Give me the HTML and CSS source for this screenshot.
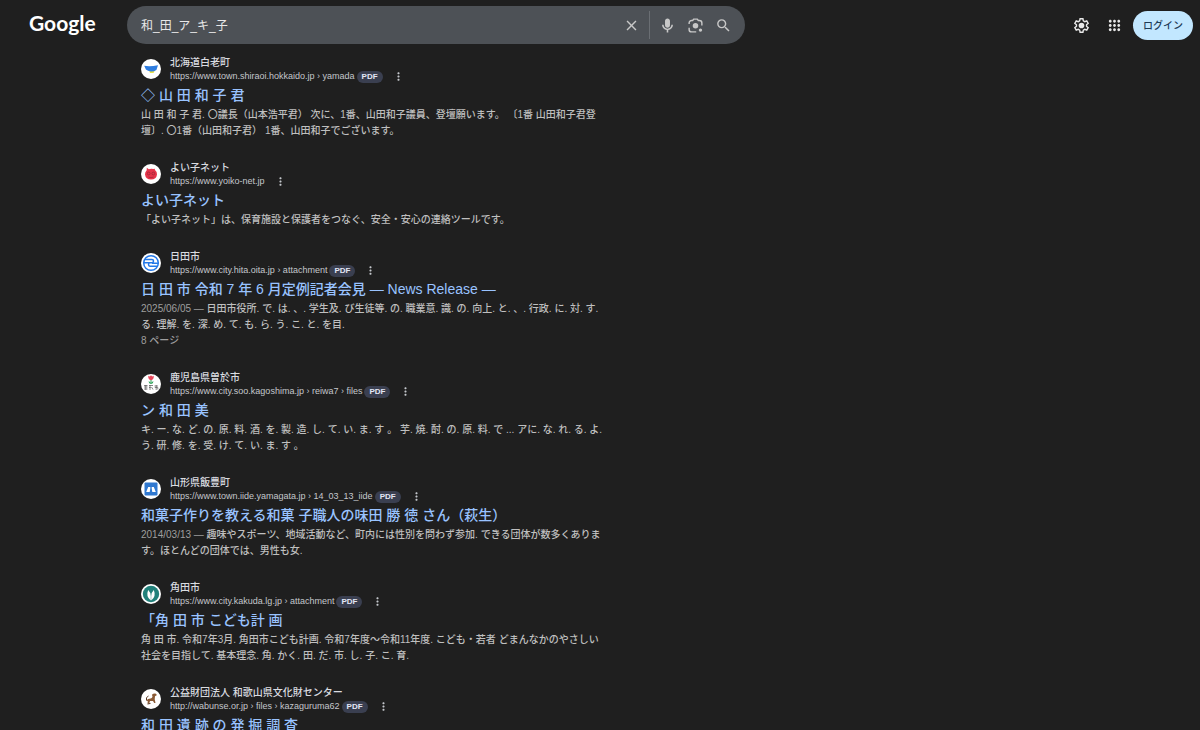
FILE: index.html
```html
<!DOCTYPE html>
<html lang="ja">

<head>
    <meta charset="utf-8">
    <meta name="viewport" content="width=device-width, initial-scale=1">
    <link rel="stylesheet" href="styles.css">

    <title>和_田_ア_キ_子 - Google 検索</title>
</head>

<body>

    <!-- shared icons -->
    <svg class="sprite" aria-hidden="true">
        <symbol id="dots" viewBox="0 0 24 24">
            <path d="M12 8c1.100 0 2-.9 2-2s-.9-2-2-2-2 .9-2 2 .9 2 2 2zm0 2c-1.100 0-2 .9-2 2s.9 2 2 2 2-.9 2-2-.9-2-2-2zm0 6c-1.100 0-2 .9-2 2s.9 2 2 2 2-.9 2-2-.9-2-2-2z" />
        </symbol>
    </svg>

    <div class="page">
        <header class="topbar">
            <a class="logo" href="#">Google</a>

            <form class="search" role="search">
                <input class="search-input" type="text" aria-label="検索" value="和_田_ア_キ_子">
                <button class="icon-button clear-button" type="button" aria-label="クリア">
                    <svg class="icon" viewBox="0 0 24 24"><path d="M19 6.410L17.590 5 12 10.590 6.410 5 5 6.410 10.590 12 5 17.590 6.410 19 12 13.410 17.590 19 19 17.590 13.410 12z" /></svg>
                </button>
                <button class="icon-button" type="button" aria-label="音声で検索">
                    <svg class="icon" viewBox="0 0 24 24"><path d="M12 15c1.900 0 3.500-1.500 3.500-3.500V5.500C15.500 3.500 13.900 2 12 2S8.500 3.500 8.500 5.500v6C8.500 13.500 10.100 15 12 15zm5.500-4c0 3.200-2.500 5.500-5.500 5.500S6.500 14.200 6.500 11h-2.200c0 3.800 2.900 6.900 6.600 7.400V22h2.200v-3.600c3.700-.5 6.600-3.600 6.600-7.400z" /></svg>
                </button>
                <button class="icon-button" type="button" aria-label="画像で検索">
                    <svg class="icon" viewBox="0 0 24 24">
                        <path class="line" d="M3 10V8.500A3.500 3.500 0 0 1 6.500 5H8l1.500-2h5L16 5h1.500A3.500 3.500 0 0 1 21 8.500V12M3 15v2.500A3.500 3.500 0 0 0 6.500 21H13" />
                        <circle cx="12" cy="12.500" r="3.900" />
                        <circle cx="19" cy="18.500" r="2.400" />
                    </svg>
                </button>
                <button class="icon-button" type="submit" aria-label="検索">
                    <svg class="icon" viewBox="0 0 24 24"><path d="M15.500 14h-.79l-.28-.27A6.471 6.471 0 0 0 16 9.500 6.500 6.500 0 1 0 9.500 16c1.610 0 3.090-.59 4.230-1.570l.27.28v.79l5 4.990L20.490 19l-4.990-5zm-6 0C7.010 14 5 11.990 5 9.500S7.010 5 9.500 5 14 7.010 14 9.500 11.990 14 9.500 14z" /></svg>
                </button>
            </form>

            <div class="account">
                <button class="icon-button" type="button" aria-label="設定">
                    <svg class="icon icon-light" viewBox="0 0 24 24">
                        <path class="line" d="M10 2.500h4l.6 3 1.900 1.100 2.900-1 2 3.400-2.300 2v2l2.300 2-2 3.400-2.900-1-1.900 1.100-.6 3h-4l-.6-3-1.900-1.100-2.900 1-2-3.400 2.300-2v-2l-2.300-2 2-3.400 2.900 1 1.900-1.100z" />
                        <circle cx="12" cy="12" r="4" />
                    </svg>
                </button>
                <button class="icon-button" type="button" aria-label="Google アプリ">
                    <svg class="icon icon-light" viewBox="0 0 24 24"><path d="M6 8c1.100 0 2-.9 2-2s-.9-2-2-2-2 .9-2 2 .9 2 2 2zm6 12c1.100 0 2-.9 2-2s-.9-2-2-2-2 .9-2 2 .9 2 2 2zm-6 0c1.100 0 2-.9 2-2s-.9-2-2-2-2 .9-2 2 .9 2 2 2zm0-6c1.100 0 2-.9 2-2s-.9-2-2-2-2 .9-2 2 .9 2 2 2zm6 0c1.100 0 2-.9 2-2s-.9-2-2-2-2 .9-2 2 .9 2 2 2zm4-8c0 1.100.9 2 2 2s2-.9 2-2-.9-2-2-2-2 .9-2 2zm-4 2c1.100 0 2-.9 2-2s-.9-2-2-2-2 .9-2 2 .9 2 2 2zm6 6c1.100 0 2-.9 2-2s-.9-2-2-2-2 .9-2 2 .9 2 2 2zm0 6c1.100 0 2-.9 2-2s-.9-2-2-2-2 .9-2 2 .9 2 2 2z" /></svg>
                </button>
                <button class="login-button" type="button">ログイン</button>
            </div>
        </header>

        <main class="results">
            <article class="result">
                <div class="source">
                    <svg class="favicon" viewBox="0 0 20 20">
                        <circle cx="10" cy="10" r="10" fill="#fff" />
                        <path d="M8 11h6l-1.500 3H9z" fill="#e6e04a" />
                        <path d="M3.200 6.800Q9 8 17 6.200l-1.600 4.700q-2.500 1.600-5.500 1.500-3.200-.1-5-1.800z" fill="#2f7de0" />
                    </svg>
                    <div>
                        <div class="site">北海道白老町</div>
                        <div class="address">
                            <cite>https://www.town.shiraoi.hokkaido.jp › yamada</cite>
                            <span class="badge">PDF</span>
                            <button class="more" type="button" aria-label="この検索結果について"><svg class="more-icon"><use href="#dots" /></svg></button>
                        </div>
                    </div>
                </div>
                <h3 class="title"><a href="#">◇ 山 田 和 子 君</a></h3>
                <p class="snippet">山 田 和 子 君. 〇議長（山本浩平君） 次に、1番、山田和子議員、登壇願います。 〔1番 山田和子君登<br>壇〕. 〇1番（山田和子君） 1番、山田和子でございます。</p>
            </article>

            <article class="result">
                <div class="source">
                    <svg class="favicon" viewBox="0 0 20 20">
                        <circle cx="10" cy="10" r="10" fill="#fff" />
                        <path d="M5.800 3.800l2 1.400Q10 4.300 12.300 5l1.400-.3.300 1.400q2.200 1.800 2 4.400-.6 5-6 5t-6-5q-.1-2.400 1.700-4.200z" fill="#e5344a" />
                        <g fill="none" stroke="#8c2434" stroke-width=".6"><circle cx="7.700" cy="9.500" r="1.400" /><circle cx="12.300" cy="9.500" r="1.400" /><path d="M7.500 13q2.500 1.500 5 0" /></g>
                    </svg>
                    <div>
                        <div class="site">よい子ネット</div>
                        <div class="address">
                            <cite>https://www.yoiko-net.jp</cite>
                            <button class="more" type="button" aria-label="この検索結果について"><svg class="more-icon"><use href="#dots" /></svg></button>
                        </div>
                    </div>
                </div>
                <h3 class="title"><a href="#">よい子ネット</a></h3>
                <p class="snippet">「よい子ネット」は、保育施設と保護者をつなぐ、安全・安心の連絡ツールです。</p>
            </article>

            <article class="result">
                <div class="source">
                    <svg class="favicon" viewBox="0 0 20 20">
                        <circle cx="10" cy="10" r="10" fill="#fff" />
                        <g fill="none" stroke="#2378e8" stroke-width="1.500">
                            <circle cx="10" cy="10" r="7.300" />
                            <path d="M4 6.500h7q1.500 0 1.500 1.500t-1.500 1.700H9q-1.500 0-1.500 1.700T9 13.300h7M3 9.800h6M11 10.200h6" />
                        </g>
                    </svg>
                    <div>
                        <div class="site">日田市</div>
                        <div class="address">
                            <cite>https://www.city.hita.oita.jp › attachment</cite>
                            <span class="badge">PDF</span>
                            <button class="more" type="button" aria-label="この検索結果について"><svg class="more-icon"><use href="#dots" /></svg></button>
                        </div>
                    </div>
                </div>
                <h3 class="title"><a href="#">日 田 市 令和 7 年 6 月定例記者会見 — News Release —</a></h3>
                <p class="snippet"><span class="meta">2025/06/05 —</span> 日田市役所. で. は. 、. 学生及. び生徒等. の. 職業意. 識. の. 向上. と. 、. 行政. に. 対. す.<br>る. 理解. を. 深. め. て. も. ら. う. こ. と. を目.</p>
                <div class="snippet meta">8 ページ</div>
            </article>

            <article class="result">
                <div class="source">
                    <svg class="favicon" viewBox="0 0 20 20">
                        <circle cx="10" cy="10" r="10" fill="#fff" />
                        <path d="M10 5v5" stroke="#2fa35a" stroke-width="1" />
                        <path d="M10 10q-.2-2.500-2.500-2.800.2 2.500 2.500 2.800zm0 0q.2-2.500 2.500-2.800-.2 2.500-2.500 2.800z" fill="#2fa35a" />
                        <path d="M7.300 1.800l1.500.7L10 1.200l1.200 1.300 1.500-.7q.5 4-2.700 4.400Q6.800 5.800 7.300 1.800z" fill="#e8485c" />
                        <path d="M3 11.500h3.500M3 13h3.500M3 15h3.500M4.800 11v5M8 11.500h4M8 13.500h1.800M10.500 13l1.500 2.500M9 11v5M13.500 12h3.500M15.200 11v5M13.800 13.500h3v2" fill="none" stroke="#555" stroke-width=".7" />
                    </svg>
                    <div>
                        <div class="site">鹿児島県曽於市</div>
                        <div class="address">
                            <cite>https://www.city.soo.kagoshima.jp › reiwa7 › files</cite>
                            <span class="badge">PDF</span>
                            <button class="more" type="button" aria-label="この検索結果について"><svg class="more-icon"><use href="#dots" /></svg></button>
                        </div>
                    </div>
                </div>
                <h3 class="title"><a href="#">ン 和 田 美</a></h3>
                <p class="snippet">キ. ー. な. ど. の. 原. 料. 酒. を. 製. 造. し. て. い. ま. す 。 芋. 焼. 酎. の. 原. 料. で ... アに. な. れ. る. よ.<br>う. 研. 修. を. 受. け. て. い. ま. す 。</p>
            </article>

            <article class="result">
                <div class="source">
                    <svg class="favicon" viewBox="0 0 20 20">
                        <circle cx="10" cy="10" r="10" fill="#fff" />
                        <rect x="3.500" y="3.500" width="13" height="13" rx="1" fill="#2f78d0" />
                        <path d="M5.200 13l2-5h2.100v1.500l-.6 3.500zM14.800 13l-2-5h-2.100v1.500l.6 3.500z" fill="#fff" />
                    </svg>
                    <div>
                        <div class="site">山形県飯豊町</div>
                        <div class="address">
                            <cite>https://www.town.iide.yamagata.jp › 14_03_13_iide</cite>
                            <span class="badge">PDF</span>
                            <button class="more" type="button" aria-label="この検索結果について"><svg class="more-icon"><use href="#dots" /></svg></button>
                        </div>
                    </div>
                </div>
                <h3 class="title"><a href="#">和菓子作りを教える和菓 子職人の味田 勝 徳 さん（萩生）</a></h3>
                <p class="snippet"><span class="meta">2014/03/13 —</span> 趣味やスポーツ、地域活動など、町内には性別を問わず参加. できる団体が数多くありま<br>す。ほとんどの団体では、男性も女.</p>
            </article>

            <article class="result">
                <div class="source">
                    <svg class="favicon" viewBox="0 0 20 20">
                        <circle cx="10" cy="10" r="10" fill="#fff" />
                        <circle cx="10" cy="10" r="8.200" fill="#21807a" />
                        <path d="M9.800 16.500Q4.500 12.500 7.200 6 9.800 8.500 9.800 12zM10.200 16.500Q15.500 12.500 12.800 6q-2.600 2.500-2.600 6z" fill="#fff" />
                    </svg>
                    <div>
                        <div class="site">角田市</div>
                        <div class="address">
                            <cite>https://www.city.kakuda.lg.jp › attachment</cite>
                            <span class="badge">PDF</span>
                            <button class="more" type="button" aria-label="この検索結果について"><svg class="more-icon"><use href="#dots" /></svg></button>
                        </div>
                    </div>
                </div>
                <h3 class="title"><a href="#">「角 田 市 こども計 画</a></h3>
                <p class="snippet">角 田 市. 令和7年3月. 角田市こども計画. 令和7年度～令和11年度. こども・若者 どまんなかのやさしい<br>社会を目指して. 基本理念. 角. かく. 田. だ. 市. し. 子. こ. 育.</p>
            </article>

            <article class="result">
                <div class="source">
                    <svg class="favicon" viewBox="0 0 20 20">
                        <circle cx="10" cy="10" r="10" fill="#fff" />
                        <path d="M5.500 11.500q1-2 4-2 1.500-.2 2-1.800l-.5-1.900q1.200-1.600 3.500-1.300l1.500 1.500-2 1.200-.3 3 .8 3.800h-1.300l-1.200-2H9l-.8 2.500H6.500l.3-2.300z" fill="#8a5a35" />
                        <path d="M5.500 11.500Q4.500 8 7.500 7M6.500 15l3-.6" fill="none" stroke="#5a3a26" stroke-width="1" />
                    </svg>
                    <div>
                        <div class="site">公益財団法人 和歌山県文化財センター</div>
                        <div class="address">
                            <cite>http://wabunse.or.jp › files › kazaguruma62</cite>
                            <span class="badge">PDF</span>
                            <button class="more" type="button" aria-label="この検索結果について"><svg class="more-icon"><use href="#dots" /></svg></button>
                        </div>
                    </div>
                </div>
                <h3 class="title"><a href="#">和 田 遺 跡 の 発 掘 調 査</a></h3>
            </article>
        </main>
    </div>

</body>

</html>
```

FILE: styles.css
```css
* {
    box-sizing: border-box;
}

body {
    margin: 0;
    background: #1f1f1f;
    color: #bfbfbf;
    font-family: "Liberation Sans", "Noto Sans CJK JP", sans-serif;
    font-size: 10px;
    font-weight: 500;
}

button,
input {
    border: none;
    padding: 0;
    background: none;
    color: inherit;
    font-family: inherit;
}

button {
    cursor: pointer;
}

a {
    color: inherit;
    text-decoration: none;
}

.sprite {
    display: none;
}

.page {
    height: 100vh;
    overflow-y: auto;
    scrollbar-width: none;
}

/* top bar */
.topbar {
    position: sticky;
    top: 0;
    z-index: 1;
    display: grid;
    grid-template-columns: 98px minmax(0, 618px) 1fr;
    align-items: center;
    height: 50px;
    padding: 0 7px 0 29px;
    background: #1f1f1f;
}

.logo {
    padding-bottom: 4px;
    color: #ffffff;
    font-family: Lato, sans-serif;
    font-size: 21px;
    font-weight: bold;
    line-height: 26px;
}

.search {
    display: flex;
    align-items: center;
    height: 38px;
    padding: 0 8px 0 14px;
    border-radius: 19px;
    background: #4d5156;
}

.search-input {
    flex: 1;
    min-width: 0;
    height: 28px;
    padding-bottom: 2px;
    color: #e8e8e8;
    font-size: 12px;
    line-height: 26px;
    outline: none;
}

.icon-button {
    display: flex;
    align-items: center;
    justify-content: center;
    width: 28px;
    height: 28px;
}

.clear-button {
    width: 36px;
    margin-right: 3px;
    border-right: 1px solid #6a6e73;
}

.icon {
    width: 17px;
    height: 17px;
    fill: #c8c8c8;
}

.icon-light {
    fill: #e8e8e8;
}

.line {
    fill: none;
    stroke: #c8c8c8;
    stroke-width: 2;
}

.icon-light .line {
    stroke: #e8e8e8;
}

.account {
    display: flex;
    align-items: center;
    justify-content: flex-end;
    gap: 5px;
}

.login-button {
    height: 29px;
    padding: 0 10px 2px;
    border-radius: 15px;
    background: #c2e7ff;
    color: #1f3b57;
    font-size: 10px;
    font-weight: 500;
}

/* results */
.results {
    padding: 5px 20px 0 141px;
}

.result {
    margin-bottom: 21px;
}

.source {
    display: flex;
    align-items: center;
    gap: 9px;
    height: 28px;
}

.favicon {
    width: 20px;
    height: 20px;
}

.site {
    color: #dadce0;
    font-size: 10px;
    line-height: 15px;
}

.address {
    display: flex;
    align-items: center;
    height: 13px;
    color: #c4c7cc;
    font-size: 9px;
    line-height: 13px;
    white-space: nowrap;
}

cite {
    font-style: normal;
}

.badge {
    margin-left: 2px;
    padding: 0 5px;
    border-radius: 6px;
    background: #3a3f50;
    color: #e3e6f5;
    font-size: 8px;
    font-weight: bold;
    line-height: 12px;
}

.more {
    display: flex;
    margin-left: 9px;
}

.more-icon {
    width: 13px;
    height: 13px;
    fill: #c4c7cc;
}

.title {
    margin: 1px 0;
    color: #99c3ff;
    font-size: 14px;
    font-weight: 500;
    line-height: 22px;
    white-space: nowrap;
}

.snippet {
    margin: 0;
    line-height: 16px;
    white-space: nowrap;
}

.meta {
    color: #9e9e9e;
}
```
